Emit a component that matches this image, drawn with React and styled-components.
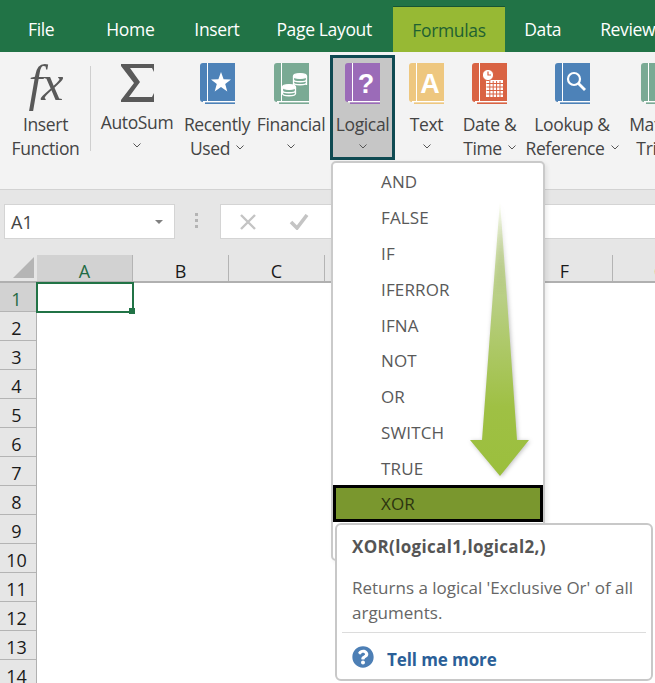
import React from 'react'
import styled, { createGlobalStyle } from 'styled-components'
import { FaQuestionCircle } from 'react-icons/fa'

const GlobalStyle = createGlobalStyle`
    html, body {
        margin: 0;
        padding: 0;
        background: #fff;
    }
    body {
        font-family: "Open Sans", "Noto Sans", sans-serif;
        overflow: hidden;
    }
`;

const Page = styled.div`
    position: relative;
    width: 655px;
    height: 683px;
    overflow: hidden;
    background: #fff;
`;

const TabBar = styled.div`
    display: flex;
    align-items: flex-end;
    height: 52px;
    padding-left: 8.5px;
    background: #217346;
    white-space: nowrap;
`;

const Tab = styled.div`
    flex: none;
    height: ${p => p.$active ? '46px' : '52px'};
    line-height: ${p => p.$active ? '46px' : '58px'};
    padding: 0 ${p => p.$active ? '19px' : '19.5px'};
    margin-right: ${p => p.$gap || 0}px;
    font-size: 17.5px;
    letter-spacing: -0.35px;
    color: ${p => p.$active ? '#1f6132' : '#fff'};
    background: ${p => p.$active ? '#97b934' : 'transparent'};
    border-top: ${p => p.$active ? '1px solid #175434' : 'none'};
    box-sizing: border-box;
`;

const Ribbon = styled.div`
    display: flex;
    align-items: flex-start;
    height: 138px;
    padding: 3px 0 0 1px;
    box-sizing: border-box;
    background: #f3f3f3;
    border-bottom: 1px solid #d2d2d2;
    overflow: hidden;
`;

const RibbonButton = styled.div`
    flex: none;
    display: flex;
    flex-direction: column;
    align-items: center;
    width: ${p => p.$w}px;
    height: 105px;
    padding-top: 5px;
    box-sizing: border-box;
    border: 3px solid ${p => p.$active ? '#0f4a52' : 'transparent'};
    background: ${p => p.$active ? '#c6c6c6' : 'transparent'};
`;

const IconSlot = styled.div`
    display: flex;
    align-items: center;
    justify-content: center;
    height: 41px;
    margin-bottom: 7.5px;
`;

const FxMark = styled.span`
    font-family: "Liberation Serif", serif;
    font-style: italic;
    font-size: 50px;
    line-height: 41px;
    letter-spacing: -1px;
    color: #595959;
`;

const Label = styled.div`
    height: 24px;
    line-height: 24px;
    font-size: 17.5px;
    letter-spacing: -0.35px;
    color: #444;
    white-space: nowrap;
    text-align: center;
    display: flex;
    align-items: center;
    gap: 6px;
`;

const Divider = styled.div`
    flex: none;
    width: 1px;
    height: 85px;
    margin: 11px 1px 0 0;
    background: #cfcfcf;
`;

const FormulaBar = styled.div`
    display: flex;
    align-items: flex-start;
    height: 65px;
    padding: 14px 0 0 4px;
    box-sizing: border-box;
    background: #e6e6e6;
`;

const NameBox = styled.div`
    flex: none;
    display: flex;
    align-items: center;
    justify-content: space-between;
    width: 171px;
    height: 35px;
    padding: 1px 11px 0 6px;
    box-sizing: border-box;
    background: #fff;
    border: 1px solid #d4d4d4;
    font-size: 18px;
    color: #444;
`;

const Caret = styled.div`
    width: 0;
    height: 0;
    border-left: 4px solid transparent;
    border-right: 4px solid transparent;
    border-top: 4px solid #808080;
`;

const Grip = styled.div`
    flex: none;
    display: flex;
    flex-direction: column;
    gap: 3px;
    width: 3px;
    margin: 9px 22px 0 20px;
    span {
        width: 3px;
        height: 3px;
        background: #b4b4b4;
    }
`;

const FormulaInput = styled.div`
    flex: 1;
    display: flex;
    align-items: center;
    gap: 33px;
    height: 35px;
    margin-right: -4px;
    padding-left: 19px;
    box-sizing: border-box;
    background: #fff;
    border: 1px solid #d4d4d4;
`;

const ColumnHeader = styled.div`
    display: flex;
    height: 28px;
    background: #e6e6e6;
    border-bottom: 2px solid #b0b0b0;
    box-sizing: border-box;
`;

const Corner = styled.div`
    flex: none;
    display: flex;
    align-items: flex-end;
    justify-content: flex-end;
    width: 37px;
    padding: 0 3px 3px 0;
    box-sizing: border-box;
`;

const Triangle = styled.div`
    width: 21px;
    height: 21px;
    background: #b5b5b5;
    clip-path: polygon(100% 0, 100% 100%, 0 100%);
`;

const ColumnCell = styled.div`
    flex: none;
    width: 96px;
    box-sizing: border-box;
    border-right: 1px solid #b4b4b4;
    background: ${p => p.$active ? '#d2d2d2' : 'transparent'};
    color: ${p => p.$active ? '#1f6b45' : '#1a1a1a'};
    text-align: center;
    font-size: 18px;
    line-height: 33px;
    height: 26px;
`;

const SheetBody = styled.div`
    display: flex;
`;

const RowHeader = styled.div`
    flex: none;
    width: 37px;
    box-sizing: border-box;
    background: #e6e6e6;
    border-right: 1px solid #b0b0b0;
`;

const RowCell = styled.div`
    height: 29px;
    box-sizing: border-box;
    border-bottom: 1px solid #b4b4b4;
    padding-right: 3px;
    text-align: center;
    font-size: 18px;
    line-height: 33px;
    color: ${p => p.$active ? '#1f6b45' : '#1a1a1a'};
    background: ${p => p.$active ? '#d2d2d2' : 'transparent'};
`;

const SelectedCell = styled.div`
    position: relative;
    width: 98px;
    height: 31px;
    margin: -1px 0 0 -1px;
    box-sizing: border-box;
    border: 2px solid #217346;
    &::after {
        content: '';
        position: absolute;
        right: -3px;
        bottom: -3px;
        width: 6px;
        height: 6px;
        background: #217346;
    }
`;

const Menu = styled.div`
    position: absolute;
    left: 331px;
    top: 161px;
    width: 214px;
    height: 400px;
    box-sizing: border-box;
    background: #fff;
    border: 2px solid #cacaca;
    border-radius: 5px;
    box-shadow: 2px 2px 4px rgba(0, 0, 0, 0.08);
`;

const MenuItem = styled.div`
    height: ${p => p.$selected ? '37px' : '35.9px'};
    margin-top: ${p => p.$selected ? '-1px' : '0'};
    line-height: ${p => p.$selected ? '32px' : '38px'};
    padding-left: ${p => p.$selected ? '45px' : '48px'};
    box-sizing: border-box;
    font-size: 17px;
    letter-spacing: 0.15px;
    color: ${p => p.$selected ? '#2c3410' : '#595959'};
    background: ${p => p.$selected ? '#7a972e' : 'transparent'};
    border: ${p => p.$selected ? '3px solid #000' : 'none'};
`;

const Arrow = styled.svg`
    position: absolute;
    left: 462px;
    top: 196px;
    filter: drop-shadow(1px 1px 2px rgba(0, 0, 0, 0.25));
`;

const Tooltip = styled.div`
    position: absolute;
    left: 335px;
    top: 523px;
    width: 318px;
    height: 158px;
    padding: 0 5px;
    box-sizing: border-box;
    background: #fff;
    border: 2px solid #c8c8c8;
    border-radius: 6px;
`;

const TipTitle = styled.div`
    padding: 10px 0 0 10px;
    height: 38px;
    box-sizing: border-box;
    line-height: 24px;
    font-size: 17px;
    font-weight: 700;
    letter-spacing: 0.33px;
    color: #555;
    white-space: nowrap;
`;

const TipText = styled.div`
    padding: 12px 0 0 10px;
    height: 69px;
    box-sizing: border-box;
    font-size: 17px;
    line-height: 25px;
    color: #666;
`;

const TipFooter = styled.div`
    display: flex;
    align-items: center;
    gap: 13px;
    height: 47px;
    padding-left: 10px;
    border-top: 1px solid #dcdcdc;
`;

const TipLink = styled.span`
    padding-top: 5px;
    font-size: 17px;
    font-weight: 700;
    letter-spacing: -0.1px;
    color: #2b5f98;
`;

const Chevron = () => (
    <svg width="8" height="5" viewBox="0 0 8 5" fill="none" stroke="#555" strokeWidth="1">
        <path d="M0.5 0.5L4 4L7.5 0.5" />
    </svg>
)

const Book = ({ color, children }) => (
    <svg width="35" height="41" viewBox="0 0 35 41">
        <path d="M3 0H35V39H3Q0 39 0 36V3Q0 0 3 0Z" fill={color} />
        <rect x="7" y="0" width="1" height="38" fill="#fff" />
        <rect x="3" y="38" width="32" height="1.4" fill="#fff" />
        <rect x="5" y="39.4" width="30" height="1.6" fill={color} />
        {children}
    </svg>
)

const GlyphText = styled.text`
    font-family: "Liberation Sans", sans-serif;
    font-weight: 700;
    fill: #fff;
    text-anchor: middle;
`;

const Coins = () => (
    <g fill="none" stroke="#fff" strokeWidth="1.3">
        <ellipse cx="26" cy="13" rx="6.5" ry="2.4" fill="#fff" />
        <path d="M19.5 16.5c0 3 13 3 13 0M19.5 19.5c0 3 13 3 13 0M19.5 13v9M32.5 13v9" />
        <ellipse cx="15" cy="24" rx="6.5" ry="2.4" fill="#fff" />
        <path d="M8.5 27.5c0 3 13 3 13 0M8.5 30.5c0 3 13 3 13 0M8.5 24v7M21.5 24v7" />
    </g>
)

const Calendar = () => (
    <g>
        <rect x="14" y="17" width="17" height="17" fill="#fff" />
        <path d="M14.5 20.5H31M14.5 24H31M14.5 27.5H31M14.5 31H31M17.8 18V34M21.2 18V34M24.6 18V34M28 18V34" stroke="#d96343" strokeWidth="1" />
        <circle cx="16" cy="12" r="5.6" fill="#fff" stroke="#d96343" strokeWidth="1" />
        <path d="M16 8.5V12H19" fill="none" stroke="#d96343" strokeWidth="1.2" />
    </g>
)

const Lens = () => (
    <g fill="none" stroke="#fff" strokeWidth="2.2">
        <circle cx="19" cy="16" r="6" />
        <path d="M23.5 20.5L30 27" strokeWidth="2.8" />
    </g>
)

const buttons = [
    { w: 90, lines: ['AutoSum'], icon: 'sum' },
    { w: 70, lines: ['Recently', 'Used'], icon: 'star', color: '#4d82b8' },
    { w: 78, lines: ['Financial'], icon: 'coins', color: '#7aaa94' },
    { w: 65, lines: ['Logical'], icon: 'q', color: '#9b6bb8', active: true },
    { w: 63, lines: ['Text'], icon: 'a', color: '#eec77f' },
    { w: 63, lines: ['Date &', 'Time'], icon: 'cal', color: '#d96343' },
    { w: 102, lines: ['Lookup &', 'Reference'], icon: 'lens', color: '#4d82b8' },
    { w: 70, lines: ['Math &', 'Trig'], icon: 'none', color: '#7aaa94' },
]

const renderIcon = b => {
    if (b.icon === 'sum') {
        return <svg width="33" height="38" viewBox="0 0 33 38" fill="#595959">
            <path d="M0 0H33V8L31 4H9L19 18L8 33H31L33 29V38H0V36L13 19L0 2Z" />
        </svg>
    }
    return <Book color={b.color}>
        {b.icon === 'star' && <polygon fill="#fff" points="21,9 23.6,16.2 31,16.4 25.2,21 27.3,28.4 21,24 14.7,28.4 16.8,21 11,16.4 18.4,16.2" />}
        {b.icon === 'coins' && <Coins />}
        {b.icon === 'q' && <GlyphText x="21" y="30" fontSize="27">?</GlyphText>}
        {b.icon === 'a' && <GlyphText x="21" y="30" fontSize="27">A</GlyphText>}
        {b.icon === 'cal' && <Calendar />}
        {b.icon === 'lens' && <Lens />}
    </Book>
}

const rows = Array.from({ length: 14 }, (_, i) => i + 1)
const items = ['AND', 'FALSE', 'IF', 'IFERROR', 'IFNA', 'NOT', 'OR', 'SWITCH', 'TRUE']

const App = () => {
    return <Page>
        <GlobalStyle />
        <TabBar>
            <Tab $gap={13}>File</Tab>
            <Tab $gap={1}>Home</Tab>
            <Tab $gap={-2}>Insert</Tab>
            <Tab $gap={2}>Page Layout</Tab>
            <Tab $active>Formulas</Tab>
            <Tab>Data</Tab>
            <Tab>Review</Tab>
        </TabBar>

        <Ribbon>
            <RibbonButton $w={89}>
                <IconSlot><FxMark>fx</FxMark></IconSlot>
                <Label>Insert</Label>
                <Label>Function</Label>
            </RibbonButton>
            <Divider />
            {buttons.map(b => (
                <RibbonButton key={b.lines[0]} $w={b.w} $active={b.active}>
                    <IconSlot>{renderIcon(b)}</IconSlot>
                    <Label>{b.lines[0]}</Label>
                    {b.lines[1]
                        ? <Label>{b.lines[1]}<Chevron /></Label>
                        : <Label><Chevron /></Label>}
                </RibbonButton>
            ))}
        </Ribbon>

        <FormulaBar>
            <NameBox>A1<Caret /></NameBox>
            <Grip><span /><span /><span /></Grip>
            <FormulaInput>
                <svg width="16" height="16" viewBox="0 0 16 16" fill="none" stroke="#c4c4c4" strokeWidth="2.4">
                    <path d="M1 1L15 15M15 1L1 15" />
                </svg>
                <svg width="20" height="16" viewBox="0 0 20 16" fill="none" stroke="#c4c4c4" strokeWidth="3.6">
                    <path d="M2 8L8 14L18 1" />
                </svg>
            </FormulaInput>
        </FormulaBar>

        <ColumnHeader>
            <Corner><Triangle /></Corner>
            {['A', 'B', 'C', 'D', 'E', 'F', 'G'].map(c => (
                <ColumnCell key={c} $active={c === 'A'}>{c}</ColumnCell>
            ))}
        </ColumnHeader>

        <SheetBody>
            <RowHeader>
                {rows.map(r => <RowCell key={r} $active={r === 1}>{r}</RowCell>)}
            </RowHeader>
            <SelectedCell />
        </SheetBody>

        <Menu>
            {items.map(i => <MenuItem key={i}>{i}</MenuItem>)}
            <MenuItem $selected>XOR</MenuItem>
        </Menu>

        <Arrow width="76" height="288" viewBox="0 0 76 288">
            <defs>
                <linearGradient id="arrowFill" x1="0" y1="0" x2="0" y2="1">
                    <stop offset="0" stopColor="#9bbf3d" stopOpacity="0" />
                    <stop offset="0.35" stopColor="#b9cf85" />
                    <stop offset="0.75" stopColor="#9fc044" />
                    <stop offset="1" stopColor="#9bbf3d" />
                </linearGradient>
            </defs>
            <path d="M38 4L55 244H67L38 280L8 244H20Z" fill="url(#arrowFill)" />
        </Arrow>

        <Tooltip>
            <TipTitle>XOR(logical1,logical2,)</TipTitle>
            <TipText>Returns a logical 'Exclusive Or' of all arguments.</TipText>
            <TipFooter>
                <FaQuestionCircle size={22} color="#4d7fb5" />
                <TipLink>Tell me more</TipLink>
            </TipFooter>
        </Tooltip>
    </Page>
}

export default App
